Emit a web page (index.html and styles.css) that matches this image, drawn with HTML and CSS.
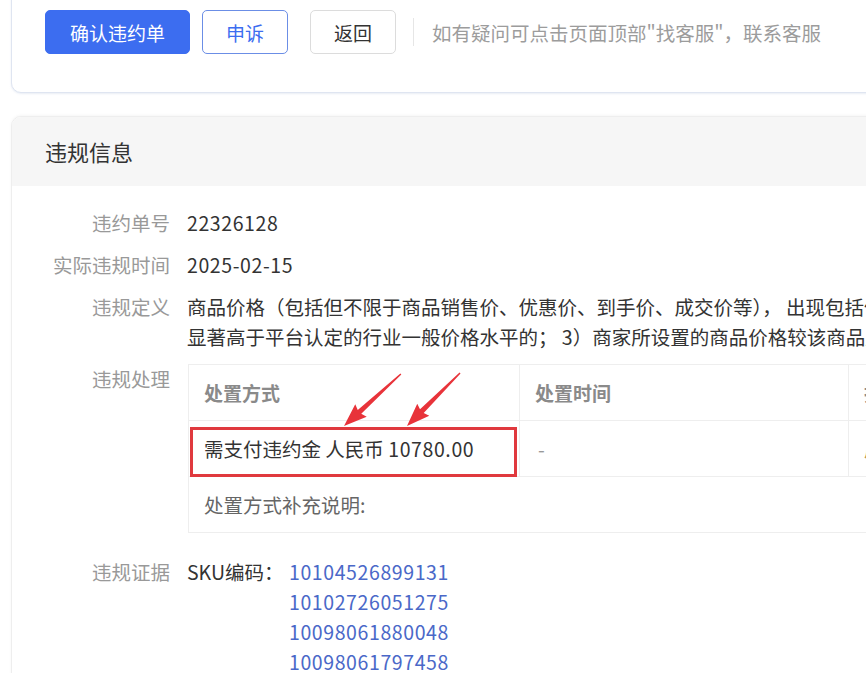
FILE: index.html
```html
<!DOCTYPE html>
<html lang="zh-CN">
<head>
    <meta charset="UTF-8">
    <title>违约单详情</title>
    <link rel="stylesheet" href="styles.css">
</head>
<body>
    <div class="page">
        <div class="card top-card">
            <div class="actions">
                <button class="btn btn-primary">确认违约单</button>
                <button class="btn btn-outline">申诉</button>
                <button class="btn btn-default">返回</button>
                <span class="divider"></span>
                <span class="tip">如有疑问可点击页面顶部"找客服"，联系客服</span>
            </div>
        </div>

        <div class="card info-card">
            <div class="card-header">违规信息</div>
            <div class="card-body">
                <div class="info-row">
                    <div class="label">违约单号</div>
                    <div class="value num">22326128</div>
                </div>
                <div class="info-row">
                    <div class="label">实际违规时间</div>
                    <div class="value num">2025-02-15</div>
                </div>
                <div class="info-row">
                    <div class="label">违规定义</div>
                    <div class="value nowrap">商品价格（包括但不限于商品销售价、优惠价、到手价、成交价等）， 出现包括但不限于以下情形之一的：<br>显著高于平台认定的行业一般价格水平的； 3）商家所设置的商品价格较该商品历史价格明显偏高的。</div>
                </div>
                <div class="info-row table-row">
                    <div class="label">违规处理</div>
                    <div class="value">
                        <div class="table-wrap">
                            <table class="deal-table">
                                <thead>
                                    <tr>
                                        <th class="col-1">处置方式</th>
                                        <th class="col-2">处置时间</th>
                                        <th class="col-3">操作</th>
                                    </tr>
                                </thead>
                                <tbody>
                                    <tr>
                                        <td class="marked">需支付违约金 人民币 <span class="num">10780.00</span><span class="mark-box"></span></td>
                                        <td class="muted">-</td>
                                        <td class="link-tan">展开</td>
                                    </tr>
                                    <tr>
                                        <td colspan="3" class="note">处置方式补充说明:</td>
                                    </tr>
                                </tbody>
                            </table>
                            <svg class="arrows" width="330" height="80">
                                <polygon fill="#e8333a" points="0,0 23,-8.5 21,-2.6 77,-0.7 77,0.7 21,2.6 23,8.5" transform="translate(156,62) rotate(-42.4)"/>
                                <polygon fill="#e8333a" points="0,0 23,-8.5 21,-2.6 75,-0.7 75,0.7 21,2.6 23,8.5" transform="translate(219,62) rotate(-45)"/>
                            </svg>
                        </div>
                    </div>
                </div>
                <div class="info-row">
                    <div class="label">违规证据</div>
                    <div class="value sku">
                        <span class="sku-title">SKU编码：</span>
                        <div class="sku-list num">
                            <a href="#">10104526899131</a>
                            <a href="#">10102726051275</a>
                            <a href="#">10098061880048</a>
                            <a href="#">10098061797458</a>
                        </div>
                    </div>
                </div>
            </div>
        </div>
    </div>
</body>
</html>
```

FILE: styles.css
```css
body {
    margin: 0;
    background: #fff;
    font-family: "Noto Sans CJK SC", "Noto Sans", sans-serif;
    font-size: 19.5px;
    color: #333;
    overflow: hidden;
}
.page {
    width: 1200px;
    padding-left: 11px;
}
.card {
    border-radius: 10px;
    background: #fff;
}
.top-card {
    margin-top: -20px;
    padding: 29px 33px 38px;
    border: 1px solid #dfe5f1;
    box-shadow: 0 1px 2px rgba(200, 210, 230, 0.4);
}
.actions {
    display: flex;
    align-items: center;
}
.btn {
    height: 44px;
    padding: 0;
    border-radius: 5px;
    font-family: inherit;
    font-size: 19px;
    background: #fff;
    cursor: pointer;
}
.btn-primary {
    width: 145px;
    background: #3c6df0;
    border: 1px solid #3c6df0;
    color: #fff;
}
.btn-outline {
    width: 86px;
    margin-left: 12px;
    border: 1px solid #6b8ee6;
    color: #3c6df0;
}
.btn-default {
    width: 86px;
    margin-left: 22px;
    border: 1px solid #dcdcdc;
    color: #333;
}
.divider {
    width: 1px;
    height: 28px;
    background: #e6e6e6;
    margin: 0 18px 0 17px;
}
.tip {
    color: #9c9c9c;
    font-size: 19.5px;
}
.info-card {
    margin-top: 23px;
    border: 1px solid #eeeeee;
    box-shadow: 0 -1px 3px rgba(0, 0, 0, 0.04);
    overflow: hidden;
}
.card-header {
    height: 69px;
    line-height: 69px;
    padding-left: 33px;
    background: #f6f6f6;
    font-size: 22px;
    color: #333;
}
.card-body {
    padding-top: 22px;
}
.info-row {
    display: grid;
    grid-template-columns: 158px 1fr;
    column-gap: 17px;
    line-height: 30px;
    margin-bottom: 12px;
}
.label {
    text-align: right;
    color: #999;
}
.value {
    color: #333;
}
.num {
    letter-spacing: 0.6px;
}
.nowrap {
    white-space: nowrap;
}
.table-row {
    margin-bottom: 24px;
}
.table-wrap {
    position: relative;
    margin-left: 1px;
}
.deal-table {
    border-collapse: collapse;
    width: 990px;
    table-layout: fixed;
}
.deal-table th,
.deal-table td {
    border: 1px solid #eeeeee;
    padding: 13px 15px 12px;
    text-align: left;
    line-height: 30px;
    white-space: nowrap;
}
.deal-table th {
    font-weight: bold;
    color: #8a8a8a;
    font-size: 19px;
}
.col-1 {
    width: 300px;
}
.col-2 {
    width: 298px;
}
.deal-table td.muted {
    color: #999;
    padding-left: 18px;
}
.deal-table td.link-tan {
    color: #b89a5a;
}
.deal-table td.note {
    color: #666;
}
.marked {
    position: relative;
}
.mark-box {
    position: absolute;
    left: 1px;
    right: 2px;
    top: 6px;
    bottom: -1px;
    border: 3px solid #e0393e;
}
.arrows {
    position: absolute;
    left: 0;
    top: 0;
    pointer-events: none;
}
.sku {
    display: flex;
}
.sku-title {
    width: 102px;
}
.sku-list a {
    display: block;
    color: #4a68c8;
    text-decoration: none;
}
```
